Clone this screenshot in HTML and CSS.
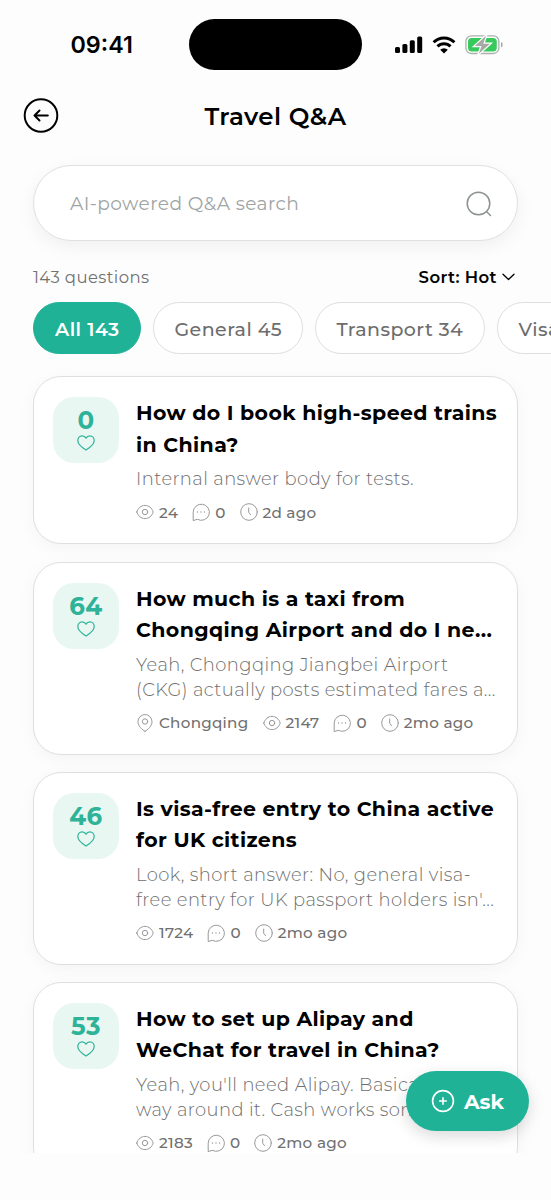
FILE: index.html
```
<!DOCTYPE html>
<html lang="en">
<head>
<meta charset="utf-8">
<title>Travel Q&amp;A</title>
<link rel="stylesheet" href="styles.css">
</head>
<body>
<svg class="defs" aria-hidden="true">
  <symbol id="heart" viewBox="0 0 18 16"><path d="M9 15C6.500 13.400.8 10 .8 5.500.8 2.800 2.700.8 5.100.8 6.800.8 8.200 1.600 9 3.100 9.800 1.600 11.200.8 12.900.8c2.400 0 4.300 2 4.300 4.700C17.200 10 11.500 13.400 9 15Z"/></symbol>
  <symbol id="eye" viewBox="0 0 18 18"><path d="M.8 9C2 5 5.200 2.400 9 2.400S16 5 17.200 9C16 13 12.800 15.600 9 15.600S2 13 .8 9Z"/><circle cx="9" cy="9" r="2.700"/></symbol>
  <symbol id="chat" viewBox="0 0 18 18"><path d="M1.200 17.200V9.200a8.100 8.100 0 1 1 4.400 7.300Z"/><path class="dots" d="M5.500 9h.01M9 9h.01M12.500 9h.01"/></symbol>
  <symbol id="clock" viewBox="0 0 18 18"><circle cx="9" cy="9" r="8.300"/><path d="M8.700 5v4.300l1.800 2.300"/></symbol>
  <symbol id="pin" viewBox="0 0 18 18"><path d="M9 17.300C6.200 15.600 2 12.400 2 7.600a7 7 0 0 1 14 0C16 12.400 11.800 15.600 9 17.300Z"/><circle cx="9" cy="7.500" r="2.700"/></symbol>
</svg>

<div class="phone">
  <div class="status">
    <div class="time">09:41</div>
    <div class="island"></div>
    <div class="indicators">
      <svg width="28" height="18" viewBox="0 0 28 18"><rect x="0" y="11" width="5" height="6" rx="1.500"/><rect x="7.400" y="8" width="5" height="9" rx="1.500"/><rect x="14.800" y="4.300" width="5" height="12.700" rx="1.500"/><rect x="22.200" y="0.500" width="5" height="16.500" rx="1.500"/></svg>
      <svg width="24" height="18" viewBox="0 0 24 18"><g fill="none" stroke="#000" stroke-width="3"><path d="M1.600 6.200a14.700 14.700 0 0 1 20.800 0"/><path d="M5.500 10.400a9.200 9.200 0 0 1 13 0"/></g><path d="M12 17.500 8.200 13.700a5.400 5.400 0 0 1 7.600 0Z"/></svg>
      <svg width="38" height="20" viewBox="0 0 38 20"><rect x=".9" y=".9" width="33" height="17.600" rx="5.500" fill="#fff" stroke="#aab1aa" stroke-width="1.300"/><rect x="3" y="3" width="28.800" height="13.400" rx="3.600" fill="#38c95d"/><path d="M36 7v5.400c2.200-.8 2.200-4.600 0-5.400Z" fill="#a6aaa6"/><path d="M21 .8 9.800 11h6.700L13.800 18.800 25 8.800h-6.700Z" fill="#a5aaa5" stroke="#fff" stroke-width="2.400" paint-order="stroke"/></svg>
    </div>
  </div>

  <header class="topbar">
    <svg class="back" width="36" height="36" viewBox="0 0 36 36"><circle cx="18" cy="17.500" r="16.300"/><path d="M24.800 17.500H11.500M16.500 12.500l-5 5 5 5"/></svg>
    <h1>Travel Q&amp;A</h1>
  </header>

  <div class="search">
    <span>AI-powered Q&amp;A search</span>
    <svg width="26" height="26" viewBox="0 0 26 26"><circle cx="12.500" cy="12.500" r="11.300"/><path d="m20.500 20.500 4 4"/></svg>
  </div>

  <div class="summary">
    <span class="count">143 questions</span>
    <span class="sort">Sort: Hot <svg width="13" height="8" viewBox="0 0 13 8"><path d="m1 1.300 5.500 5.200L12 1.300"/></svg></span>
  </div>

  <nav class="chips">
    <span class="chip active">All 143</span>
    <span class="chip general">General 45</span>
    <span class="chip transport">Transport 34</span>
    <span class="chip visa">Visa 28</span>
  </nav>

  <main class="list">
    <article class="card">
      <div class="votes"><b>0</b><svg><use href="#heart"/></svg></div>
      <div class="content">
        <h2><span>How do I book high-speed trains</span><span>in China?</span></h2>
        <p><span>Internal answer body for tests.</span></p>
        <div class="meta"><span><svg><use href="#eye"/></svg>24</span><span><svg><use href="#chat"/></svg>0</span><span><svg><use href="#clock"/></svg>2d ago</span></div>
      </div>
    </article>
    <article class="card">
      <div class="votes"><b>64</b><svg><use href="#heart"/></svg></div>
      <div class="content">
        <h2><span>How much is a taxi from</span><span>Chongqing Airport and do I ne...</span></h2>
        <p><span>Yeah, Chongqing Jiangbei Airport</span><span>(CKG) actually posts estimated fares a...</span></p>
        <div class="meta"><span><svg><use href="#pin"/></svg>Chongqing</span><span><svg><use href="#eye"/></svg>2147</span><span><svg><use href="#chat"/></svg>0</span><span><svg><use href="#clock"/></svg>2mo ago</span></div>
      </div>
    </article>
    <article class="card">
      <div class="votes"><b>46</b><svg><use href="#heart"/></svg></div>
      <div class="content">
        <h2><span>Is visa-free entry to China active</span><span>for UK citizens</span></h2>
        <p><span>Look, short answer: No, general visa-</span><span>free entry for UK passport holders isn'...</span></p>
        <div class="meta"><span><svg><use href="#eye"/></svg>1724</span><span><svg><use href="#chat"/></svg>0</span><span><svg><use href="#clock"/></svg>2mo ago</span></div>
      </div>
    </article>
    <article class="card">
      <div class="votes"><b>53</b><svg><use href="#heart"/></svg></div>
      <div class="content">
        <h2><span>How to set up Alipay and</span><span>WeChat for travel in China?</span></h2>
        <p><span>Yeah, you'll need Alipay. Basica</span><span>way around it. Cash works som</span></p>
        <div class="meta"><span><svg><use href="#eye"/></svg>2183</span><span><svg><use href="#chat"/></svg>0</span><span><svg><use href="#clock"/></svg>2mo ago</span></div>
      </div>
    </article>
  </main>

  <button class="ask"><svg width="24" height="24" viewBox="0 0 24 24"><circle cx="12" cy="12" r="10.400"/><path d="M12 8.700v6.600M8.700 12h6.600"/></svg>Ask</button>
</div>
</body>
</html>
```
FILE: styles.css
```
* { box-sizing: border-box; }

body {
  margin: 0;
  background: #fdfdfd;
  color: #000;
  font-family: "Montserrat", "Inter", "Liberation Sans", sans-serif;
  letter-spacing: 0.4px;
}

svg { display: block; flex: none; }
.defs { position: absolute; width: 0; height: 0; }

.phone {
  position: relative;
  display: flex;
  flex-direction: column;
  width: 551px;
  height: 1200px;
  padding-bottom: 47px;
  overflow: hidden;
}

/* Status bar */
.status {
  flex: none;
  display: grid;
  grid-template-columns: 189px 173px 1fr;
  align-items: center;
  height: 89px;
}
.time {
  padding-left: 70.5px;
  font-family: "Inter", "Liberation Sans", sans-serif;
  font-size: 23.3px;
  font-weight: 580;
  letter-spacing: 0;
}
.island { height: 51px; border-radius: 26px; background: #000; }
.indicators {
  display: flex;
  align-items: center;
  gap: 9px;
  padding-left: 33px;
}

/* Title bar */
.topbar {
  flex: none;
  display: grid;
  grid-template-columns: 36px 1fr 36px;
  align-items: center;
  height: 53px;
  padding: 0 23px;
}
.back, .search svg, .sort svg, .ask svg, .votes svg, .meta svg {
  fill: none;
  stroke: currentColor;
  stroke-linecap: round;
  stroke-linejoin: round;
}
.back { stroke-width: 2; }
h1 {
  margin: 0;
  font-size: 24.5px;
  font-weight: 600;
  letter-spacing: 0.45px;
  text-align: center;
}

/* Search */
.search {
  flex: none;
  display: flex;
  align-items: center;
  justify-content: space-between;
  height: 76px;
  margin: 23px 33px 0;
  padding: 1px 25px 0 36px;
  border: 1px solid #dfe1e1;
  border-radius: 38px;
  background: #fff;
  box-shadow: 0 6px 18px rgba(0, 0, 0, 0.055);
  color: #a0a4a4;
  font-size: 18.6px;
}
.search svg { stroke-width: 1.5; color: #8d9191; }

/* Count and sorting */
.summary {
  flex: none;
  display: flex;
  align-items: center;
  justify-content: space-between;
  height: 24px;
  margin: 24px 36px 0 33px;
  font-size: 16.5px;
}
.count { color: #717171; }
.sort {
  display: flex;
  align-items: center;
  gap: 5px;
  font-weight: 600;
}
.sort svg { stroke-width: 1.3; }

/* Filters */
.chips {
  flex: none;
  display: flex;
  gap: 12px;
  margin-top: 13px;
  padding-left: 33px;
}
.chip {
  flex: none;
  display: flex;
  align-items: center;
  height: 52px;
  padding: 2px 0 0 20.5px;
  border: 1px solid #dedfdf;
  border-radius: 26px;
  background: #fff;
  color: #6d6d6d;
  font-size: 19px;
  font-weight: 500;
  letter-spacing: 0.45px;
  white-space: nowrap;
}
.chip.active {
  width: 108px;
  padding-left: 21px;
  border-color: #20b297;
  background: #20b297;
  color: #fff;
  font-weight: 600;
}
.general { width: 150px; }
.transport { width: 170px; }
.visa { width: 128px; }

/* Questions */
.list {
  flex: 1;
  display: flex;
  flex-direction: column;
  gap: 17.2px;
  min-height: 0;
  padding: 22.4px 33px 0;
  overflow: hidden;
}
.card {
  flex: none;
  display: flex;
  gap: 17px;
  padding: 20px 19px;
  border: 1px solid #dedfdf;
  border-radius: 28px;
  background: #fff;
  box-shadow: 0 4px 17px rgba(0, 0, 0, 0.04);
}
.votes {
  flex: none;
  display: flex;
  flex-direction: column;
  align-items: center;
  gap: 1px;
  width: 66px;
  height: 66px;
  padding-top: 9px;
  border-radius: 21px;
  background: #e9f7f3;
  color: #2eb398;
}
.votes b {
  font-size: 24.5px;
  line-height: 28px;
  font-weight: 700;
}
.votes svg { width: 18px; height: 16px; stroke-width: 1.2; }
.content { flex: none; width: 361px; }
.content h2, .content p { margin: 0; }
.content h2 span, .content p span { display: block; white-space: nowrap; }
.content h2 {
  font-size: 20.5px;
  font-weight: 700;
  line-height: 31.5px;
  letter-spacing: 0.38px;
}
.content p {
  margin-top: 6px;
  color: #6e6e6e;
  font-size: 17.9px;
  font-weight: 300;
  line-height: 25px;
  letter-spacing: 0.43px;
}
.meta {
  display: flex;
  gap: 14px;
  height: 20px;
  margin: 11px 0 1px;
  color: #707070;
  font-size: 15.2px;
  font-weight: 500;
  letter-spacing: 0.27px;
}
.meta > span { display: flex; align-items: center; gap: 5px; }
.meta svg { width: 18px; height: 18px; stroke: #999; stroke-width: 1; }
.dots { stroke-width: 1.4; }

/* Floating action */
.ask {
  position: absolute;
  right: 22px;
  bottom: 69px;
  display: flex;
  align-items: center;
  gap: 9px;
  width: 123px;
  height: 60px;
  padding: 0 0 0 25px;
  border: 0;
  border-radius: 30px;
  background: #20b297;
  box-shadow: 0 5px 16px rgba(0, 0, 0, 0.15);
  color: #fff;
  font: 700 20.5px "Montserrat", "Inter", "Liberation Sans", sans-serif;
}
.ask svg { stroke-width: 1.6; }
```
